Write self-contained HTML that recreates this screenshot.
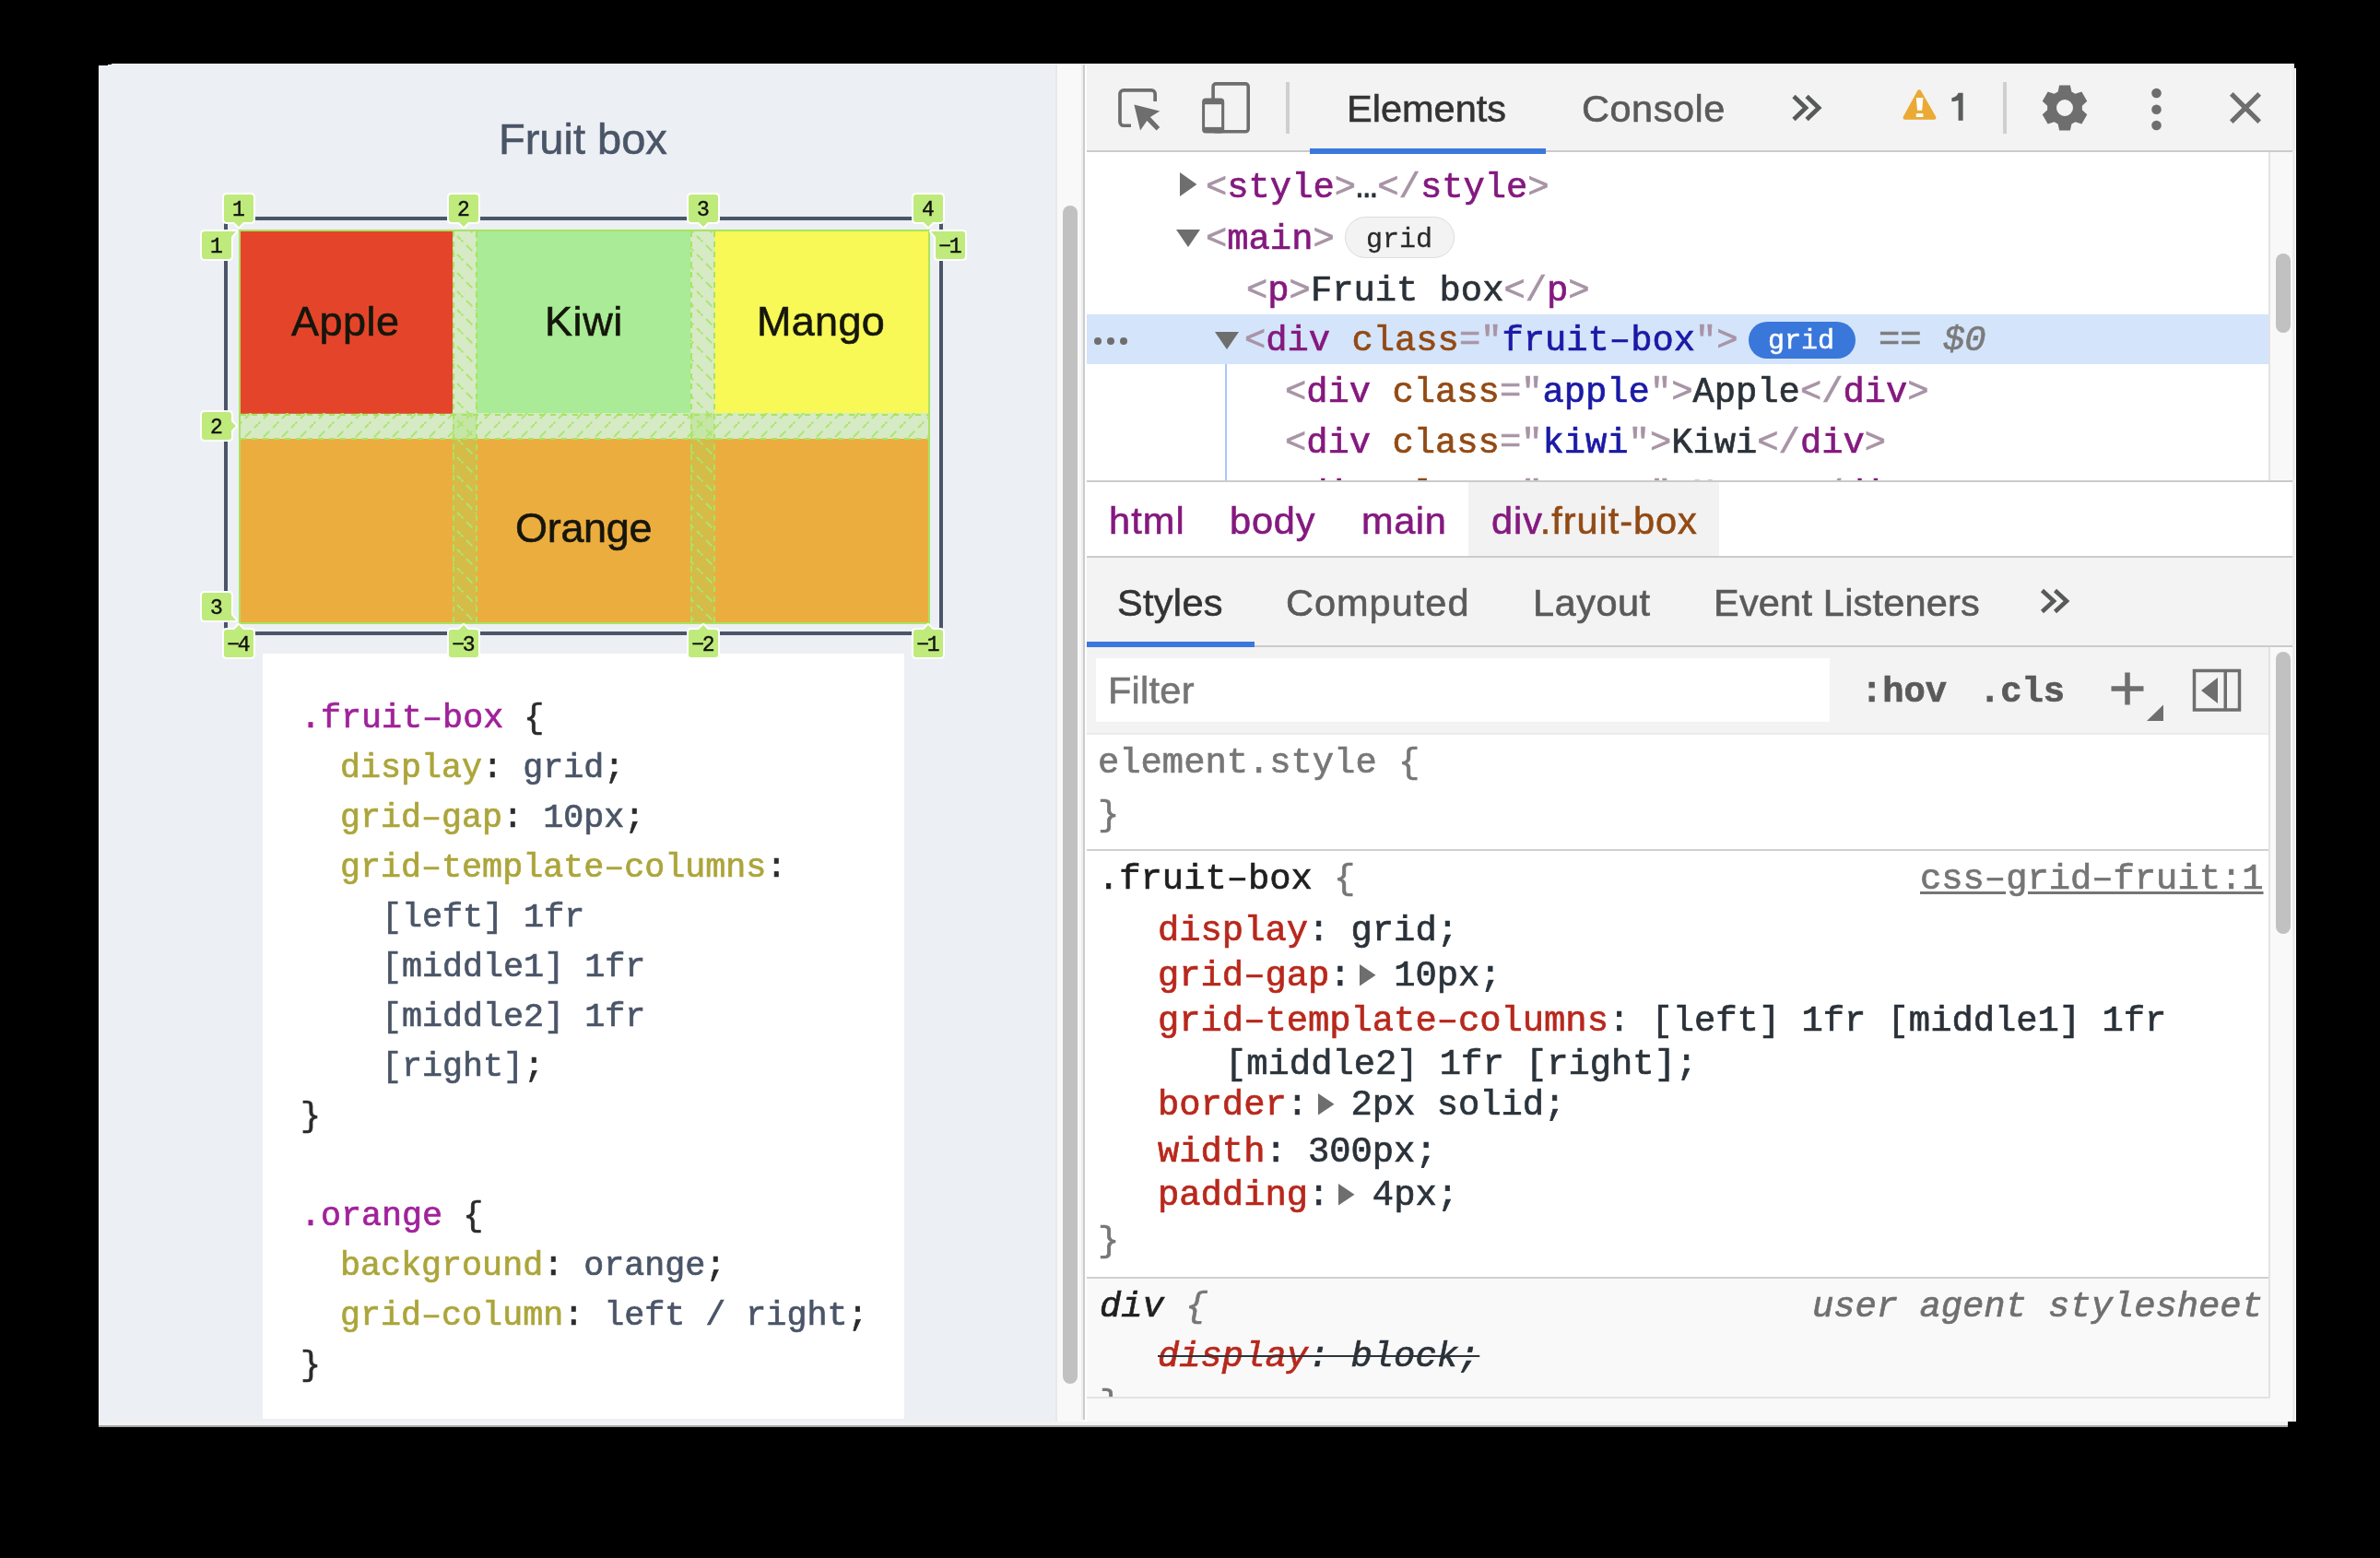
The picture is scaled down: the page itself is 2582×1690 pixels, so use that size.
<!DOCTYPE html>
<html><head><meta charset="utf-8"><style>
html,body{margin:0;padding:0}
body{width:2582px;height:1690px;background:#000;position:relative;overflow:hidden}
</style></head><body>
<div style="position:absolute;left:107px;top:69px;width:2384px;height:1477px;background:#F9F9F9"></div>
<div style="position:absolute;left:107px;top:69px;width:1038px;height:1474px;background:#ECEFF3"></div>
<div style="position:absolute;left:1145px;top:69px;width:2px;height:1474px;background:#E8E8E8"></div>
<div style="position:absolute;left:1147px;top:69px;width:26px;height:1474px;background:#F9F9F9"></div>
<div style="position:absolute;left:1173px;top:69px;width:2px;height:1471px;background:#EEEEEE"></div>
<div style="position:absolute;left:1175px;top:69px;width:2px;height:1471px;background:#CCCCCC"></div>
<div style="position:absolute;left:1153px;top:223px;width:16px;height:1278px;background:#C1C1C1;border-radius:8px"></div>
<div style="position:absolute;left:285px;top:709px;width:696px;height:830px;background:#fff"></div>
<div style="position:absolute;left:541px;top:120.01px;height:61px;line-height:61px;font-family:'Liberation Sans', sans-serif;font-size:47px;color:#4A5568;white-space:pre;will-change:transform;-webkit-text-stroke-width:0.6px;">Fruit box</div>
<div style="position:absolute;left:243px;top:235px;width:780px;height:454px;box-sizing:border-box;border:4px solid #4A5568"></div>
<div style="position:absolute;left:261px;top:251px;width:230px;height:197.5px;background:#E4452A"></div>
<div style="position:absolute;left:517px;top:251px;width:232px;height:197px;background:#A9EB96"></div>
<div style="position:absolute;left:775px;top:251px;width:232px;height:197px;background:#F8F857"></div>
<div style="position:absolute;left:261px;top:476px;width:746px;height:199px;background:#ECAD3F"></div>
<div style="position:absolute;left:316px;top:319.80px;height:58px;line-height:58px;font-family:'Liberation Sans', sans-serif;font-size:45px;color:#15160B;white-space:pre;will-change:transform;-webkit-text-stroke-width:0.6px;letter-spacing:0.5px">Apple</div>
<div style="position:absolute;left:591px;top:319.80px;height:58px;line-height:58px;font-family:'Liberation Sans', sans-serif;font-size:45px;color:#15160B;white-space:pre;will-change:transform;-webkit-text-stroke-width:0.6px;letter-spacing:0.6px">Kiwi</div>
<div style="position:absolute;left:820.5px;top:319.80px;height:58px;line-height:58px;font-family:'Liberation Sans', sans-serif;font-size:45px;color:#15160B;white-space:pre;will-change:transform;-webkit-text-stroke-width:0.6px;letter-spacing:0.3px">Mango</div>
<div style="position:absolute;left:559px;top:544.10px;height:58px;line-height:58px;font-family:'Liberation Sans', sans-serif;font-size:45px;color:#15160B;white-space:pre;will-change:transform;-webkit-text-stroke-width:0.6px;letter-spacing:-0.3px">Orange</div>
<svg style="position:absolute;left:0;top:0" width="2582" height="1690"><defs>
<pattern id="hr" patternUnits="userSpaceOnUse" width="20" height="20" patternTransform="rotate(0)">
<path d="M-2 22 L22 -2" stroke="#ADE56E" stroke-width="2" stroke-dasharray="9 5.14" stroke-dashoffset="2.83"/>
</pattern>
<pattern id="hc" patternUnits="userSpaceOnUse" width="20" height="20">
<path d="M-2 -2 L22 22" stroke="#ADE56E" stroke-width="2" stroke-dasharray="9 5.14" stroke-dashoffset="2.83"/>
</pattern>
</defs><rect x="261" y="448" width="746" height="28" fill="rgba(160,222,92,0.30)"/><rect x="491" y="251" width="26" height="424" fill="rgba(160,222,92,0.30)"/><rect x="749" y="251" width="26" height="424" fill="rgba(160,222,92,0.30)"/><rect x="261" y="448" width="746" height="28" fill="url(#hr)"/><rect x="491" y="251" width="26" height="424" fill="url(#hc)"/><rect x="749" y="251" width="26" height="424" fill="url(#hc)"/><line x1="261" y1="450" x2="1007" y2="450" stroke="#A8E460" stroke-width="2" stroke-dasharray="6 6"/><line x1="261" y1="476" x2="1007" y2="476" stroke="#A8E460" stroke-width="2" stroke-dasharray="6 6"/><line x1="492" y1="251" x2="492" y2="675" stroke="#A8E460" stroke-width="2" stroke-dasharray="6 5"/><line x1="517" y1="251" x2="517" y2="675" stroke="#A8E460" stroke-width="2" stroke-dasharray="6 5"/><line x1="750" y1="251" x2="750" y2="675" stroke="#A8E460" stroke-width="2" stroke-dasharray="6 5"/><line x1="775" y1="251" x2="775" y2="675" stroke="#A8E460" stroke-width="2" stroke-dasharray="6 5"/><rect x="260" y="250" width="748" height="426" fill="none" stroke="#A8E460" stroke-width="2"/></svg>
<svg style="position:absolute;left:0;top:0;overflow:visible" width="1" height="1"><path d="M246,211 H272 Q275,211 275,214 V238 Q275,241 272,241 H264.0 L259.0,246 L254.0,241 H246 Q243,241 243,238 V214 Q243,211 246,211 Z" fill="#BFEA7C" stroke="#fff" stroke-width="4" stroke-linejoin="round" style="paint-order:stroke"/></svg>
<div style="position:absolute;left:243px;top:212.5px;width:32px;height:30px;font-family:'Liberation Mono', monospace;font-size:23px;line-height:30px;text-align:center;color:#111;will-change:transform;-webkit-text-stroke:0.4px #111;letter-spacing:0px;text-indent:0px">1</div>
<svg style="position:absolute;left:0;top:0;overflow:visible" width="1" height="1"><path d="M490,211 H516 Q519,211 519,214 V238 Q519,241 516,241 H508.0 L503.0,246 L498.0,241 H490 Q487,241 487,238 V214 Q487,211 490,211 Z" fill="#BFEA7C" stroke="#fff" stroke-width="4" stroke-linejoin="round" style="paint-order:stroke"/></svg>
<div style="position:absolute;left:487px;top:212.5px;width:32px;height:30px;font-family:'Liberation Mono', monospace;font-size:23px;line-height:30px;text-align:center;color:#111;will-change:transform;-webkit-text-stroke:0.4px #111;letter-spacing:0px;text-indent:0px">2</div>
<svg style="position:absolute;left:0;top:0;overflow:visible" width="1" height="1"><path d="M750,211 H776 Q779,211 779,214 V238 Q779,241 776,241 H768.0 L763.0,246 L758.0,241 H750 Q747,241 747,238 V214 Q747,211 750,211 Z" fill="#BFEA7C" stroke="#fff" stroke-width="4" stroke-linejoin="round" style="paint-order:stroke"/></svg>
<div style="position:absolute;left:747px;top:212.5px;width:32px;height:30px;font-family:'Liberation Mono', monospace;font-size:23px;line-height:30px;text-align:center;color:#111;will-change:transform;-webkit-text-stroke:0.4px #111;letter-spacing:0px;text-indent:0px">3</div>
<svg style="position:absolute;left:0;top:0;overflow:visible" width="1" height="1"><path d="M994,211 H1020 Q1023,211 1023,214 V238 Q1023,241 1020,241 H1012.0 L1007.0,246 L1002.0,241 H994 Q991,241 991,238 V214 Q991,211 994,211 Z" fill="#BFEA7C" stroke="#fff" stroke-width="4" stroke-linejoin="round" style="paint-order:stroke"/></svg>
<div style="position:absolute;left:991px;top:212.5px;width:32px;height:30px;font-family:'Liberation Mono', monospace;font-size:23px;line-height:30px;text-align:center;color:#111;will-change:transform;-webkit-text-stroke:0.4px #111;letter-spacing:0px;text-indent:0px">4</div>
<svg style="position:absolute;left:0;top:0;overflow:visible" width="1" height="1"><path d="M246,683 H254.0 L259.0,678 L264.0,683 H272 Q275,683 275,686 V710 Q275,713 272,713 H246 Q243,713 243,710 V686 Q243,683 246,683 Z" fill="#BFEA7C" stroke="#fff" stroke-width="4" stroke-linejoin="round" style="paint-order:stroke"/></svg>
<div style="position:absolute;left:243px;top:684.5px;width:32px;height:30px;font-family:'Liberation Mono', monospace;font-size:23px;line-height:30px;text-align:center;color:#111;will-change:transform;-webkit-text-stroke:0.4px #111;letter-spacing:-2.5px;text-indent:-2.5px">−4</div>
<svg style="position:absolute;left:0;top:0;overflow:visible" width="1" height="1"><path d="M490,683 H498.0 L503.0,678 L508.0,683 H516 Q519,683 519,686 V710 Q519,713 516,713 H490 Q487,713 487,710 V686 Q487,683 490,683 Z" fill="#BFEA7C" stroke="#fff" stroke-width="4" stroke-linejoin="round" style="paint-order:stroke"/></svg>
<div style="position:absolute;left:487px;top:684.5px;width:32px;height:30px;font-family:'Liberation Mono', monospace;font-size:23px;line-height:30px;text-align:center;color:#111;will-change:transform;-webkit-text-stroke:0.4px #111;letter-spacing:-2.5px;text-indent:-2.5px">−3</div>
<svg style="position:absolute;left:0;top:0;overflow:visible" width="1" height="1"><path d="M750,683 H758.0 L763.0,678 L768.0,683 H776 Q779,683 779,686 V710 Q779,713 776,713 H750 Q747,713 747,710 V686 Q747,683 750,683 Z" fill="#BFEA7C" stroke="#fff" stroke-width="4" stroke-linejoin="round" style="paint-order:stroke"/></svg>
<div style="position:absolute;left:747px;top:684.5px;width:32px;height:30px;font-family:'Liberation Mono', monospace;font-size:23px;line-height:30px;text-align:center;color:#111;will-change:transform;-webkit-text-stroke:0.4px #111;letter-spacing:-2.5px;text-indent:-2.5px">−2</div>
<svg style="position:absolute;left:0;top:0;overflow:visible" width="1" height="1"><path d="M994,683 H1002.0 L1007.0,678 L1012.0,683 H1020 Q1023,683 1023,686 V710 Q1023,713 1020,713 H994 Q991,713 991,710 V686 Q991,683 994,683 Z" fill="#BFEA7C" stroke="#fff" stroke-width="4" stroke-linejoin="round" style="paint-order:stroke"/></svg>
<div style="position:absolute;left:991px;top:684.5px;width:32px;height:30px;font-family:'Liberation Mono', monospace;font-size:23px;line-height:30px;text-align:center;color:#111;will-change:transform;-webkit-text-stroke:0.4px #111;letter-spacing:-2.5px;text-indent:-2.5px">−1</div>
<svg style="position:absolute;left:0;top:0;overflow:visible" width="1" height="1"><path d="M222,251 H256 L251,257 V278 Q251,281 248,281 H222 Q219,281 219,278 V254 Q219,251 222,251 Z" fill="#BFEA7C" stroke="#fff" stroke-width="4" stroke-linejoin="round" style="paint-order:stroke"/></svg>
<div style="position:absolute;left:219px;top:252.5px;width:32px;height:30px;font-family:'Liberation Mono', monospace;font-size:23px;line-height:30px;text-align:center;color:#111;will-change:transform;-webkit-text-stroke:0.4px #111;letter-spacing:0px;text-indent:0px">1</div>
<svg style="position:absolute;left:0;top:0;overflow:visible" width="1" height="1"><path d="M222,447 H248 Q251,447 251,450 V457.0 L256,462.0 L251,467.0 V474 Q251,477 248,477 H222 Q219,477 219,474 V450 Q219,447 222,447 Z" fill="#BFEA7C" stroke="#fff" stroke-width="4" stroke-linejoin="round" style="paint-order:stroke"/></svg>
<div style="position:absolute;left:219px;top:448.5px;width:32px;height:30px;font-family:'Liberation Mono', monospace;font-size:23px;line-height:30px;text-align:center;color:#111;will-change:transform;-webkit-text-stroke:0.4px #111;letter-spacing:0px;text-indent:0px">2</div>
<svg style="position:absolute;left:0;top:0;overflow:visible" width="1" height="1"><path d="M222,643 H248 Q251,643 251,646 V667 L256,673 H222 Q219,673 219,670 V646 Q219,643 222,643 Z" fill="#BFEA7C" stroke="#fff" stroke-width="4" stroke-linejoin="round" style="paint-order:stroke"/></svg>
<div style="position:absolute;left:219px;top:644.5px;width:32px;height:30px;font-family:'Liberation Mono', monospace;font-size:23px;line-height:30px;text-align:center;color:#111;will-change:transform;-webkit-text-stroke:0.4px #111;letter-spacing:0px;text-indent:0px">3</div>
<svg style="position:absolute;left:0;top:0;overflow:visible" width="1" height="1"><path d="M1010,251 H1044 Q1047,251 1047,254 V278 Q1047,281 1044,281 H1018 Q1015,281 1015,278 V257 Z" fill="#BFEA7C" stroke="#fff" stroke-width="4" stroke-linejoin="round" style="paint-order:stroke"/></svg>
<div style="position:absolute;left:1015px;top:252.5px;width:32px;height:30px;font-family:'Liberation Mono', monospace;font-size:23px;line-height:30px;text-align:center;color:#111;will-change:transform;-webkit-text-stroke:0.4px #111;letter-spacing:-2.5px;text-indent:-2.5px">−1</div>
<div style="position:absolute;left:326px;top:754.93px;height:48px;line-height:48px;font-family:'Liberation Mono', monospace;font-size:36.7px;color:#2B2B2B;white-space:pre;will-change:transform;-webkit-text-stroke-width:0.7px;"><span style="color:#A0229B">.fruit–box</span><span style="color:#2B2B2B"> {</span></div>
<div style="position:absolute;left:369.3px;top:808.90px;height:48px;line-height:48px;font-family:'Liberation Mono', monospace;font-size:36.7px;color:#2B2B2B;white-space:pre;will-change:transform;-webkit-text-stroke-width:0.7px;"><span style="color:#ACA53B">display</span><span style="color:#2B2B2B">:</span><span style="color:#4A5568"> grid</span><span style="color:#2B2B2B">;</span></div>
<div style="position:absolute;left:369.3px;top:862.87px;height:48px;line-height:48px;font-family:'Liberation Mono', monospace;font-size:36.7px;color:#2B2B2B;white-space:pre;will-change:transform;-webkit-text-stroke-width:0.7px;"><span style="color:#ACA53B">grid–gap</span><span style="color:#2B2B2B">:</span><span style="color:#4A5568"> 10px</span><span style="color:#2B2B2B">;</span></div>
<div style="position:absolute;left:369.3px;top:916.84px;height:48px;line-height:48px;font-family:'Liberation Mono', monospace;font-size:36.7px;color:#2B2B2B;white-space:pre;will-change:transform;-webkit-text-stroke-width:0.7px;"><span style="color:#ACA53B">grid–template–columns</span><span style="color:#2B2B2B">:</span></div>
<div style="position:absolute;left:414.3px;top:970.81px;height:48px;line-height:48px;font-family:'Liberation Mono', monospace;font-size:36.7px;color:#2B2B2B;white-space:pre;will-change:transform;-webkit-text-stroke-width:0.7px;"><span style="color:#4A5568">[left] 1fr</span></div>
<div style="position:absolute;left:414.3px;top:1024.78px;height:48px;line-height:48px;font-family:'Liberation Mono', monospace;font-size:36.7px;color:#2B2B2B;white-space:pre;will-change:transform;-webkit-text-stroke-width:0.7px;"><span style="color:#4A5568">[middle1] 1fr</span></div>
<div style="position:absolute;left:414.3px;top:1078.75px;height:48px;line-height:48px;font-family:'Liberation Mono', monospace;font-size:36.7px;color:#2B2B2B;white-space:pre;will-change:transform;-webkit-text-stroke-width:0.7px;"><span style="color:#4A5568">[middle2] 1fr</span></div>
<div style="position:absolute;left:414.3px;top:1132.72px;height:48px;line-height:48px;font-family:'Liberation Mono', monospace;font-size:36.7px;color:#2B2B2B;white-space:pre;will-change:transform;-webkit-text-stroke-width:0.7px;"><span style="color:#4A5568">[right]</span><span style="color:#2B2B2B">;</span></div>
<div style="position:absolute;left:326px;top:1186.69px;height:48px;line-height:48px;font-family:'Liberation Mono', monospace;font-size:36.7px;color:#2B2B2B;white-space:pre;will-change:transform;-webkit-text-stroke-width:0.7px;"><span style="color:#2B2B2B">}</span></div>
<div style="position:absolute;left:326px;top:1294.63px;height:48px;line-height:48px;font-family:'Liberation Mono', monospace;font-size:36.7px;color:#2B2B2B;white-space:pre;will-change:transform;-webkit-text-stroke-width:0.7px;"><span style="color:#A0229B">.orange</span><span style="color:#2B2B2B"> {</span></div>
<div style="position:absolute;left:369.3px;top:1348.60px;height:48px;line-height:48px;font-family:'Liberation Mono', monospace;font-size:36.7px;color:#2B2B2B;white-space:pre;will-change:transform;-webkit-text-stroke-width:0.7px;"><span style="color:#ACA53B">background</span><span style="color:#2B2B2B">:</span><span style="color:#4A5568"> orange</span><span style="color:#2B2B2B">;</span></div>
<div style="position:absolute;left:369.3px;top:1402.57px;height:48px;line-height:48px;font-family:'Liberation Mono', monospace;font-size:36.7px;color:#2B2B2B;white-space:pre;will-change:transform;-webkit-text-stroke-width:0.7px;"><span style="color:#ACA53B">grid–column</span><span style="color:#2B2B2B">:</span><span style="color:#4A5568"> left / right</span><span style="color:#2B2B2B">;</span></div>
<div style="position:absolute;left:326px;top:1456.54px;height:48px;line-height:48px;font-family:'Liberation Mono', monospace;font-size:36.7px;color:#2B2B2B;white-space:pre;will-change:transform;-webkit-text-stroke-width:0.7px;"><span style="color:#2B2B2B">}</span></div>
<div style="position:absolute;left:1177px;top:69px;width:2px;height:1473px;background:#fff"></div>
<div style="position:absolute;left:1179px;top:69px;width:1308px;height:1473px;background:#fff"></div>
<div style="position:absolute;left:1179px;top:69px;width:1308px;height:94px;background:#F3F3F3"></div>
<div style="position:absolute;left:1179px;top:163px;width:1308px;height:2px;background:#CBCBCB"></div>
<div style="position:absolute;left:2487px;top:69px;width:4px;height:1473px;background:#EAEAEA"></div>
<div style="position:absolute;left:1421px;top:161px;width:256px;height:6px;background:#3B78DD"></div>
<div style="position:absolute;left:1461px;top:91.41px;height:54px;line-height:54px;font-family:'Liberation Sans', sans-serif;font-size:41.5px;color:#333333;white-space:pre;will-change:transform;-webkit-text-stroke-width:0.6px;">Elements</div>
<div style="position:absolute;left:1716px;top:91.41px;height:54px;line-height:54px;font-family:'Liberation Sans', sans-serif;font-size:41.5px;color:#5A5A5A;white-space:pre;will-change:transform;-webkit-text-stroke-width:0.6px;letter-spacing:0.5px">Console</div>
<div style="position:absolute;left:1395px;top:89px;width:4px;height:56px;background:#CFCFCF"></div>
<div style="position:absolute;left:2173px;top:89px;width:4px;height:56px;background:#CFCFCF"></div>
<svg style="position:absolute;left:0;top:0" width="2582" height="200">
<path d="M1227 136.25 H1219 a4 4 0 0 1 -4 -4 V101.85 a4 4 0 0 1 4 -4 H1249.15 a4 4 0 0 1 4 4 V110" fill="none" stroke="#6E6E6E" stroke-width="3.7"/>
<path d="M1230.4 113.6 L1258.2 120.4 L1247.9 127.1 L1258.2 137.9 L1254.6 141.4 L1244.3 131.1 L1237.1 141.4 Z" fill="#6E6E6E"/>
<rect x="1316.1" y="90.9" width="38.1" height="51.9" rx="3" fill="none" stroke="#6E6E6E" stroke-width="3.6"/>
<rect x="1304.1" y="106.6" width="24.1" height="38" rx="4" fill="#6E6E6E"/>
<rect x="1307.1" y="113.2" width="18" height="24.7" fill="#F3F3F3"/>
<path d="M1946 104.5 L1959 117 L1946 129.5 M1960.1 104.5 L1973.1 117 L1960.1 129.5" fill="none" stroke="#585A5A" stroke-width="4.8"/>
<path d="M2082.1 99.5 L2098.2 127.5 L2066.8 127.5 Z" fill="#EBA935" stroke="#EBA935" stroke-width="4.5" stroke-linejoin="round"/>
<path d="M2078.8 106 H2086.4 L2085.2 119.7 H2080 Z" fill="#fff"/><rect x="2078.8" y="123.1" width="7.6" height="3.9" fill="#fff"/>
<path d="M2124.6 100.8 H2129.6 V130.8 H2124.6 V108.8 Q2122 110 2117.4 110.3 V106.3 Q2122.5 105.5 2124.6 100.8 Z" fill="#5A5C5C"/>
<circle cx="2339.5" cy="101" r="5.3" fill="#6E6E6E"/><circle cx="2339.5" cy="118.7" r="5.3" fill="#6E6E6E"/><circle cx="2339.5" cy="136" r="5.3" fill="#6E6E6E"/>
<path d="M2420.8 101.8 L2451.2 132.2 M2451.2 101.8 L2420.8 132.2" stroke="#6E6E6E" stroke-width="5.2"/>
</svg>
<svg style="position:absolute;left:0;top:0" width="2582" height="200"><path fill-rule="evenodd" fill="#6E6E6E" d="M2232.60,99.50 L2234.11,92.40 L2245.89,92.40 L2247.40,99.50 L2251.46,101.84 L2258.36,99.60 L2264.25,109.80 L2258.86,114.66 L2258.86,119.34 L2264.25,124.20 L2258.36,134.40 L2251.46,132.16 L2247.40,134.50 L2245.89,141.60 L2234.11,141.60 L2232.60,134.50 L2228.54,132.16 L2221.64,134.40 L2215.75,124.20 L2221.14,119.34 L2221.14,114.66 L2215.75,109.80 L2221.64,99.60 L2228.54,101.84 Z M2249,117 A9 9 0 1 0 2231,117 A9 9 0 1 0 2249,117 Z"/></svg>
<div style="position:absolute;left:2461px;top:165px;width:2px;height:357px;background:#E3E3E3"></div>
<div style="position:absolute;left:2463px;top:165px;width:24px;height:357px;background:#F8F8F8"></div>
<div style="position:absolute;left:2469px;top:275px;width:16px;height:86px;background:#C1C1C1;border-radius:8px"></div>
<div style="position:absolute;left:1179px;top:341px;width:1282px;height:54px;background:#D4E4FA"></div>
<div style="position:absolute;left:1329px;top:395px;width:2px;height:126px;background:#A8C7FA"></div>
<svg style="position:absolute;left:1280px;top:187px" width="20" height="26"><path d="M0 0 L18.4 13 L0 26Z" fill="#6E6E6E"/></svg>
<div style="position:absolute;left:1307.5px;top:178.67px;height:50px;line-height:50px;font-family:'Liberation Mono', monospace;font-size:38.8px;color:#2A3139;white-space:pre;will-change:transform;-webkit-text-stroke-width:0.7px;"><span style="color:#A894A6">&lt;</span><span style="color:#84197F">style</span><span style="color:#A894A6">&gt;</span><span style="color:#2A3139">…</span><span style="color:#A894A6">&lt;/</span><span style="color:#84197F">style</span><span style="color:#A894A6">&gt;</span></div>
<svg style="position:absolute;left:1276px;top:249px" width="26" height="20"><path d="M0 0 L26 0 L13 19Z" fill="#6E6E6E"/></svg>
<div style="position:absolute;left:1308px;top:235.17px;height:50px;line-height:50px;font-family:'Liberation Mono', monospace;font-size:38.8px;color:#2A3139;white-space:pre;will-change:transform;-webkit-text-stroke-width:0.7px;"><span style="color:#A894A6">&lt;</span><span style="color:#84197F">main</span><span style="color:#A894A6">&gt;</span></div>
<div style="position:absolute;left:1459px;top:235px;width:117px;height:43px;border:1.5px solid #DCDCDC;background:#F3F3F3;border-radius:23px"></div>
<div style="position:absolute;left:1482px;top:241.32px;height:39px;line-height:39px;font-family:'Liberation Mono', monospace;font-size:30px;color:#2A2A2A;white-space:pre;will-change:transform;-webkit-text-stroke-width:0.7px;-webkit-text-stroke:0.3px #2A2A2A">grid</div>
<div style="position:absolute;left:1352px;top:290.67px;height:50px;line-height:50px;font-family:'Liberation Mono', monospace;font-size:38.8px;color:#2A3139;white-space:pre;will-change:transform;-webkit-text-stroke-width:0.7px;"><span style="color:#A894A6">&lt;</span><span style="color:#84197F">p</span><span style="color:#A894A6">&gt;</span><span style="color:#2A3139">Fruit box</span><span style="color:#A894A6">&lt;/</span><span style="color:#84197F">p</span><span style="color:#A894A6">&gt;</span></div>
<div style="position:absolute;left:1187px;top:366px;width:8px;height:8px;background:#6E6E6E;border-radius:50%"></div>
<div style="position:absolute;left:1201px;top:366px;width:8px;height:8px;background:#6E6E6E;border-radius:50%"></div>
<div style="position:absolute;left:1215px;top:366px;width:8px;height:8px;background:#6E6E6E;border-radius:50%"></div>
<svg style="position:absolute;left:1318px;top:360px" width="26" height="20"><path d="M0 0 L26 0 L13 19Z" fill="#6E6E6E"/></svg>
<div style="position:absolute;left:1350px;top:345.17px;height:50px;line-height:50px;font-family:'Liberation Mono', monospace;font-size:38.8px;color:#2A3139;white-space:pre;will-change:transform;-webkit-text-stroke-width:0.7px;"><span style="color:#A894A6">&lt;</span><span style="color:#84197F">div</span> <span style="color:#924A14">class</span><span style="color:#A894A6">="</span><span style="color:#1A1AA6">fruit–box</span><span style="color:#A894A6">"&gt;</span></div>
<div style="position:absolute;left:1897px;top:349px;width:116px;height:40px;background:#3A77DB;border-radius:20px"></div>
<div style="position:absolute;left:1918px;top:351.12px;height:39px;line-height:39px;font-family:'Liberation Mono', monospace;font-size:30px;color:#fff;white-space:pre;will-change:transform;-webkit-text-stroke-width:0.7px;-webkit-text-stroke:0.5px #fff">grid</div>
<div style="position:absolute;left:2038px;top:345.17px;height:50px;line-height:50px;font-family:'Liberation Mono', monospace;font-size:38.8px;color:#2A3139;white-space:pre;will-change:transform;-webkit-text-stroke-width:0.7px;"><span style="color:#7B7B7B">==</span> <span style="color:#7B7B7B;font-style:italic">$0</span></div>
<div style="position:absolute;left:1394px;top:400.67px;height:50px;line-height:50px;font-family:'Liberation Mono', monospace;font-size:38.8px;color:#2A3139;white-space:pre;will-change:transform;-webkit-text-stroke-width:0.7px;"><span style="color:#A894A6">&lt;</span><span style="color:#84197F">div</span> <span style="color:#924A14">class</span><span style="color:#A894A6">="</span><span style="color:#1A1AA6">apple</span><span style="color:#A894A6">"&gt;</span><span style="color:#2A3139">Apple</span><span style="color:#A894A6">&lt;/</span><span style="color:#84197F">div</span><span style="color:#A894A6">&gt;</span></div>
<div style="position:absolute;left:1394px;top:456.17px;height:50px;line-height:50px;font-family:'Liberation Mono', monospace;font-size:38.8px;color:#2A3139;white-space:pre;will-change:transform;-webkit-text-stroke-width:0.7px;"><span style="color:#A894A6">&lt;</span><span style="color:#84197F">div</span> <span style="color:#924A14">class</span><span style="color:#A894A6">="</span><span style="color:#1A1AA6">kiwi</span><span style="color:#A894A6">"&gt;</span><span style="color:#2A3139">Kiwi</span><span style="color:#A894A6">&lt;/</span><span style="color:#84197F">div</span><span style="color:#A894A6">&gt;</span></div>
<div style="position:absolute;left:1177px;top:495px;width:1284px;height:26px;overflow:hidden">
<div style="position:absolute;left:217px;top:16.67px;height:50px;line-height:50px;font-family:'Liberation Mono', monospace;font-size:38.8px;color:#2A3139;white-space:pre;will-change:transform;-webkit-text-stroke-width:0.7px;"><span style="color:#A894A6">&lt;</span><span style="color:#84197F">div</span> <span style="color:#924A14">class</span><span style="color:#A894A6">="</span><span style="color:#1A1AA6">mango</span><span style="color:#A894A6">"&gt;</span><span style="color:#2A3139">Mango</span><span style="color:#A894A6">&lt;/</span><span style="color:#84197F">div</span><span style="color:#A894A6">&gt;</span></div>
</div>
<div style="position:absolute;left:1179px;top:521px;width:1308px;height:2px;background:#CBCBCB"></div>
<div style="position:absolute;left:1593px;top:523px;width:272px;height:80px;background:#F2F2F2"></div>
<div style="position:absolute;left:1202.5px;top:537.61px;height:54px;line-height:54px;font-family:'Liberation Sans', sans-serif;font-size:41.5px;color:#84197F;white-space:pre;will-change:transform;-webkit-text-stroke-width:0.6px;letter-spacing:1.1px">html</div>
<div style="position:absolute;left:1333.5px;top:537.61px;height:54px;line-height:54px;font-family:'Liberation Sans', sans-serif;font-size:41.5px;color:#84197F;white-space:pre;will-change:transform;-webkit-text-stroke-width:0.6px;letter-spacing:0.8px">body</div>
<div style="position:absolute;left:1477px;top:537.61px;height:54px;line-height:54px;font-family:'Liberation Sans', sans-serif;font-size:41.5px;color:#84197F;white-space:pre;will-change:transform;-webkit-text-stroke-width:0.6px;letter-spacing:0.6px">main</div>
<div style="position:absolute;left:1617.5px;top:537.61px;height:54px;line-height:54px;font-family:'Liberation Sans', sans-serif;font-size:41.5px;color:#84197F;white-space:pre;will-change:transform;-webkit-text-stroke-width:0.6px;letter-spacing:0.95px"><span style="color:#84197F">div</span><span style="color:#924A14">.fruit-box</span></div>
<div style="position:absolute;left:1179px;top:603px;width:1308px;height:2px;background:#CBCBCB"></div>
<div style="position:absolute;left:1179px;top:605px;width:1308px;height:95px;background:#F3F3F3"></div>
<div style="position:absolute;left:1179px;top:700px;width:1308px;height:2px;background:#CBCBCB"></div>
<div style="position:absolute;left:1179px;top:696px;width:182px;height:6px;background:#3B78DD"></div>
<div style="position:absolute;left:1212px;top:627.41px;height:54px;line-height:54px;font-family:'Liberation Sans', sans-serif;font-size:41.5px;color:#333333;white-space:pre;will-change:transform;-webkit-text-stroke-width:0.6px;letter-spacing:0.3px">Styles</div>
<div style="position:absolute;left:1394.5px;top:627.41px;height:54px;line-height:54px;font-family:'Liberation Sans', sans-serif;font-size:41.5px;color:#5A5A5A;white-space:pre;will-change:transform;-webkit-text-stroke-width:0.6px;letter-spacing:1.0px">Computed</div>
<div style="position:absolute;left:1662.5px;top:627.41px;height:54px;line-height:54px;font-family:'Liberation Sans', sans-serif;font-size:41.5px;color:#5A5A5A;white-space:pre;will-change:transform;-webkit-text-stroke-width:0.6px;letter-spacing:0.5px">Layout</div>
<div style="position:absolute;left:1858.5px;top:627.41px;height:54px;line-height:54px;font-family:'Liberation Sans', sans-serif;font-size:41.5px;color:#5A5A5A;white-space:pre;will-change:transform;-webkit-text-stroke-width:0.6px;letter-spacing:0.2px">Event Listeners</div>
<svg style="position:absolute;left:2212px;top:638px" width="40" height="32"><path d="M3.5 2.5 L16 14 L3.5 25.5 M17.5 2.5 L30 14 L17.5 25.5" fill="none" stroke="#585A5A" stroke-width="4.6"/></svg>
<div style="position:absolute;left:1179px;top:702px;width:1283px;height:93px;background:#F3F3F3"></div>
<div style="position:absolute;left:1179px;top:795px;width:1283px;height:2px;background:#EBEBEB"></div>
<div style="position:absolute;left:1189px;top:714px;width:796px;height:69px;background:#fff"></div>
<div style="position:absolute;left:1202px;top:722.11px;height:54px;line-height:54px;font-family:'Liberation Sans', sans-serif;font-size:41.5px;color:#757575;white-space:pre;will-change:transform;-webkit-text-stroke-width:0.6px;letter-spacing:0.25px">Filter</div>
<div style="position:absolute;left:2018.5px;top:725.97px;height:50px;line-height:50px;font-family:'Liberation Mono', monospace;font-size:38.8px;color:#5A5A5A;white-space:pre;will-change:transform;-webkit-text-stroke-width:0.7px;font-weight:bold">:hov</div>
<div style="position:absolute;left:2146.5px;top:725.97px;height:50px;line-height:50px;font-family:'Liberation Mono', monospace;font-size:38.8px;color:#5A5A5A;white-space:pre;will-change:transform;-webkit-text-stroke-width:0.7px;font-weight:bold">.cls</div>
<svg style="position:absolute;left:0;top:700px" width="2582" height="100">
<path d="M2308 29.5 V64.5 M2290.5 47 H2325.5" stroke="#6E6E6E" stroke-width="5.5"/>
<path d="M2347 64.5 V82 H2329 Z" fill="#6E6E6E"/>
<rect x="2380.5" y="27.5" width="49" height="42.5" fill="none" stroke="#6E6E6E" stroke-width="3.5"/>
<rect x="2412.5" y="27.5" width="3.5" height="42.5" fill="#6E6E6E"/>
<path d="M2406 35 V63 L2388 49 Z" fill="#6E6E6E"/>
</svg>
<div style="position:absolute;left:2461px;top:702px;width:2px;height:815px;background:#E3E3E3"></div>
<div style="position:absolute;left:2463px;top:702px;width:24px;height:840px;background:#F9F9F9"></div>
<div style="position:absolute;left:2469px;top:707px;width:16px;height:306px;background:#C1C1C1;border-radius:8px"></div>
<div style="position:absolute;left:1191px;top:803.17px;height:50px;line-height:50px;font-family:'Liberation Mono', monospace;font-size:38.8px;color:#777777;white-space:pre;will-change:transform;-webkit-text-stroke-width:0.7px;">element.style {</div>
<div style="position:absolute;left:1191px;top:860.17px;height:50px;line-height:50px;font-family:'Liberation Mono', monospace;font-size:38.8px;color:#777777;white-space:pre;will-change:transform;-webkit-text-stroke-width:0.7px;">}</div>
<div style="position:absolute;left:1179px;top:921px;width:1282px;height:2px;background:#D0D0D0"></div>
<div style="position:absolute;left:1191px;top:929.27px;height:50px;line-height:50px;font-family:'Liberation Mono', monospace;font-size:38.8px;color:#2A3139;white-space:pre;will-change:transform;-webkit-text-stroke-width:0.7px;"><span style="color:#1F1F1F">.fruit–box</span><span style="color:#777"> {</span></div>
<div style="position:absolute;left:2083px;top:929.27px;height:50px;line-height:50px;font-family:'Liberation Mono', monospace;font-size:38.8px;color:#757575;white-space:pre;will-change:transform;-webkit-text-stroke-width:0.7px;text-decoration:underline;text-underline-offset:3px">css–grid–fruit:1</div>
<div style="position:absolute;left:1255.5px;top:985.07px;height:50px;line-height:50px;font-family:'Liberation Mono', monospace;font-size:38.8px;color:#2A3139;white-space:pre;will-change:transform;-webkit-text-stroke-width:0.7px;"><span style="color:#B8281C">display</span><span style="color:#2A3139">: grid;</span></div>
<div style="position:absolute;left:1255.5px;top:1034.17px;height:50px;line-height:50px;font-family:'Liberation Mono', monospace;font-size:38.8px;color:#2A3139;white-space:pre;will-change:transform;-webkit-text-stroke-width:0.7px;"><span style="color:#B8281C">grid–gap</span><span style="color:#2A3139">:</span>  <span style="color:#2B333B">10px;</span></div>
<svg style="position:absolute;left:1475px;top:1046px" width="20" height="24"><path d="M0 0 L17.5 11.8 L0 23.6Z" fill="#6E6E6E"/></svg>
<div style="position:absolute;left:1255.5px;top:1083.17px;height:50px;line-height:50px;font-family:'Liberation Mono', monospace;font-size:38.8px;color:#2A3139;white-space:pre;will-change:transform;-webkit-text-stroke-width:0.7px;"><span style="color:#B8281C">grid–template–columns</span><span style="color:#2A3139">: [left] 1fr [middle1] 1fr</span></div>
<div style="position:absolute;left:1329px;top:1129.67px;height:50px;line-height:50px;font-family:'Liberation Mono', monospace;font-size:38.8px;color:#2A3139;white-space:pre;will-change:transform;-webkit-text-stroke-width:0.7px;"><span style="color:#2B333B">[middle2] 1fr [right];</span></div>
<div style="position:absolute;left:1255.5px;top:1174.17px;height:50px;line-height:50px;font-family:'Liberation Mono', monospace;font-size:38.8px;color:#2A3139;white-space:pre;will-change:transform;-webkit-text-stroke-width:0.7px;"><span style="color:#B8281C">border</span><span style="color:#2A3139">:</span>  <span style="color:#2B333B">2px solid;</span></div>
<svg style="position:absolute;left:1429.5px;top:1186px" width="20" height="24"><path d="M0 0 L17.5 11.8 L0 23.6Z" fill="#6E6E6E"/></svg>
<div style="position:absolute;left:1255.5px;top:1225.07px;height:50px;line-height:50px;font-family:'Liberation Mono', monospace;font-size:38.8px;color:#2A3139;white-space:pre;will-change:transform;-webkit-text-stroke-width:0.7px;"><span style="color:#B8281C">width</span><span style="color:#2A3139">: 300px;</span></div>
<div style="position:absolute;left:1255.5px;top:1272.27px;height:50px;line-height:50px;font-family:'Liberation Mono', monospace;font-size:38.8px;color:#2A3139;white-space:pre;will-change:transform;-webkit-text-stroke-width:0.7px;"><span style="color:#B8281C">padding</span><span style="color:#2A3139">:</span>  <span style="color:#2B333B">4px;</span></div>
<svg style="position:absolute;left:1452px;top:1284px" width="20" height="24"><path d="M0 0 L17.5 11.8 L0 23.6Z" fill="#6E6E6E"/></svg>
<div style="position:absolute;left:1191px;top:1322.17px;height:50px;line-height:50px;font-family:'Liberation Mono', monospace;font-size:38.8px;color:#777777;white-space:pre;will-change:transform;-webkit-text-stroke-width:0.7px;">}</div>
<div style="position:absolute;left:1179px;top:1385px;width:1282px;height:2px;background:#D0D0D0"></div>
<div style="position:absolute;left:1179px;top:1387px;width:1282px;height:129px;background:#F9F9F9"></div>
<div style="position:absolute;left:1193px;top:1392.67px;height:50px;line-height:50px;font-family:'Liberation Mono', monospace;font-size:38.8px;color:#2A3139;white-space:pre;will-change:transform;-webkit-text-stroke-width:0.7px;font-style:italic"><span style="color:#1F1F1F">div</span><span style="color:#777"> {</span></div>
<div style="position:absolute;left:1965.5px;top:1392.67px;height:50px;line-height:50px;font-family:'Liberation Mono', monospace;font-size:38.8px;color:#6F6F6F;white-space:pre;will-change:transform;-webkit-text-stroke-width:0.7px;font-style:italic">user agent stylesheet</div>
<div style="position:absolute;left:1255.5px;top:1446.97px;height:50px;line-height:50px;font-family:'Liberation Mono', monospace;font-size:38.8px;color:#2A3139;white-space:pre;will-change:transform;-webkit-text-stroke-width:0.7px;font-style:italic;text-decoration:line-through;text-decoration-color:#2B333B;text-decoration-thickness:2px"><span style="color:#B8281C">display</span><span style="color:#2A3139">: block;</span></div>
<div style="position:absolute;left:1177px;top:1516px;width:1284px;height:0;overflow:hidden"></div>
<div style="position:absolute;left:1177px;top:1505px;width:1284px;height:10px;overflow:hidden">
<div style="position:absolute;left:16px;top:-6.33px;height:50px;line-height:50px;font-family:'Liberation Mono', monospace;font-size:38.8px;color:#777777;white-space:pre;will-change:transform;-webkit-text-stroke-width:0.7px;">}</div>
</div>
<div style="position:absolute;left:1179px;top:1515px;width:1282px;height:2px;background:#E3E3E3"></div>
<div style="position:absolute;left:1179px;top:1517px;width:1308px;height:25px;background:#F9F9F9"></div>
<div style="position:absolute;left:107px;top:1542px;width:2380px;height:4px;background:#F2F2F2"></div>
<div style="position:absolute;left:107px;top:1546px;width:2375px;height:2px;background:#A9A9A9"></div>
<div style="position:absolute;left:2482px;top:1542px;width:9px;height:6px;background:#000"></div>
<div style="position:absolute;left:107px;top:69px;width:2384px;height:1px;background:#FBFBFB"></div>
<div style="position:absolute;left:107px;top:69px;width:1px;height:1477px;background:#F7F7F7"></div>
<div style="position:absolute;left:2490px;top:69px;width:1px;height:1473px;background:#FAFAFA"></div>
<div style="position:absolute;left:107px;top:69px;width:10px;height:2px;background:#000"></div>
<div style="position:absolute;left:117px;top:69px;width:4px;height:1px;background:#000"></div>
<div style="position:absolute;left:2489px;top:69px;width:2px;height:5px;background:#000"></div>
</body></html>
